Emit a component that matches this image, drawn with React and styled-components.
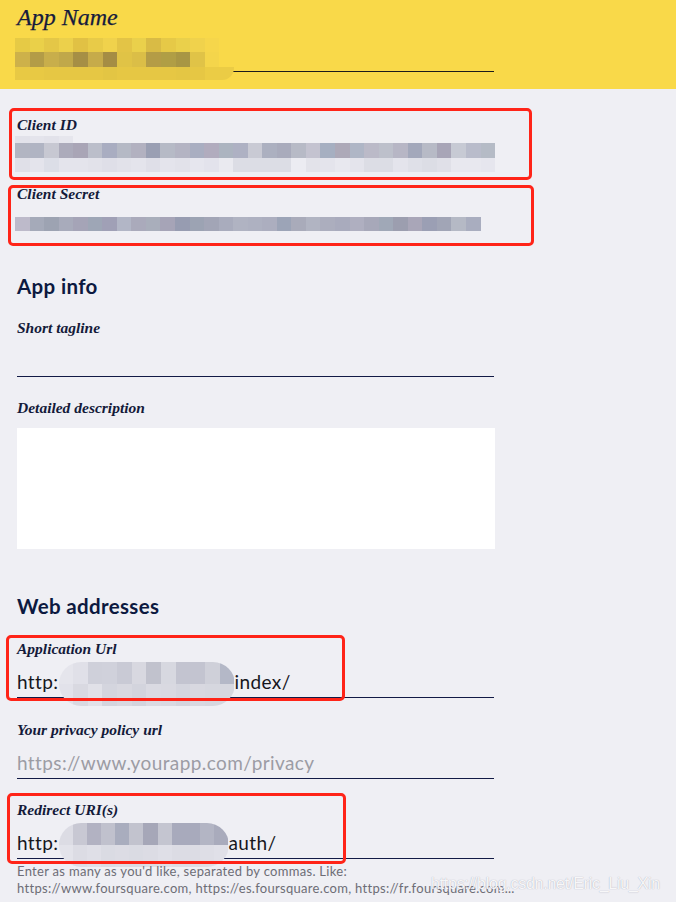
import React from "react";
import styled, { createGlobalStyle } from "styled-components";

const GlobalStyle = createGlobalStyle`
  body {
    margin: 0;
    background: #efeff4;
    font-family: "Lato", "Liberation Sans", sans-serif;
  }
`;

const Page = styled.div`
  width: 676px;
  min-height: 902px;
  background: #efeff4;
  overflow: hidden;
  position: relative;
`;

const Header = styled.header`
  background: #f9d949;
  height: 89px;
  box-sizing: border-box;
  padding: 3px 17px 0;
`;

const Title = styled.h1`
  margin: 0;
  font-family: "Liberation Serif", serif;
  font-style: italic;
  font-weight: 400;
  font-size: 24px;
  line-height: 28px;
  color: #161b3d;
  -webkit-text-stroke: 0.25px #161b3d;
`;

const HeaderInput = styled.div`
  position: relative;
  width: 477px;
  height: 40px;
  border-bottom: 1px solid #1b1b1b;
`;

const Mosaic = styled.div`
  position: absolute;
  left: ${(p) => p.$left}px;
  top: ${(p) => p.$top}px;
  display: flex;
  flex-direction: column;
`;

const MosaicRow = styled.div`
  display: flex;
  height: ${(p) => p.$h}px;
  overflow: hidden;
  border-bottom-right-radius: ${(p) => p.$radius || 0}px;
`;

const Cell = styled.span`
  display: block;
  width: ${(p) => p.$w}px;
  height: 100%;
  flex-shrink: 0;
`;

const Main = styled.main`
  padding: 26px 17px 0;
`;

const Field = styled.div`
  position: relative;
  width: 477px;
  margin-top: ${(p) => p.$mt || 0}px;
`;

const Label = styled.div`
  font-family: "Liberation Serif", serif;
  font-style: italic;
  font-weight: 700;
  font-size: 15.5px;
  line-height: 20px;
  color: #141a3a;
`;

const SecretArea = styled.div`
  position: relative;
  height: ${(p) => p.$h}px;
`;

const Heading = styled.h2`
  margin: ${(p) => p.$mt}px 0 0;
  font-family: "Lato", sans-serif;
  font-weight: 700;
  font-size: 20.5px;
  line-height: 24px;
  color: #0c1940;
  letter-spacing: 0.35px;
`;

const Input = styled.div`
  height: 39px;
  box-sizing: border-box;
  padding-top: 6px;
  border-bottom: 1px solid #121a45;
  font-family: "Lato", sans-serif;
  font-size: 19px;
  letter-spacing: 0.4px;
  color: ${(p) => (p.$placeholder ? "#9c9ca4" : "#16161c")};
  white-space: nowrap;
  display: flex;
  align-items: center;
`;

const TextArea = styled.div`
  margin-top: 10px;
  height: 121px;
  width: 478px;
  background: #ffffff;
`;

const Blur = styled.span`
  display: inline-flex;
  flex-direction: column;
  flex-shrink: 0;
  width: ${(p) => p.$w}px;
  height: 44px;
  margin-top: 6px;
  border-radius: 22px;
  overflow: hidden;
`;

const Highlight = styled.div`
  position: absolute;
  top: ${(p) => p.$top}px;
  left: ${(p) => p.$left}px;
  width: ${(p) => p.$w}px;
  height: ${(p) => p.$h}px;
  box-sizing: border-box;
  border: 3px solid #ff2418;
  border-radius: 5px;
  pointer-events: none;
  z-index: 2;
`;

const Help = styled.p`
  margin: 4px 0 0;
  font-family: "Lato", sans-serif;
  font-size: 13px;
  letter-spacing: 0.3px;
  line-height: 17px;
  color: #6d6d76;
  white-space: nowrap;
`;

const Watermark = styled.div`
  position: absolute;
  left: 431px;
  top: 875px;
  font-family: "Liberation Sans", sans-serif;
  font-size: 16px;
  letter-spacing: -0.25px;
  color: rgba(255, 255, 255, 0.92);
  text-shadow: 0 0 1px rgba(150, 150, 168, 0.9);
  white-space: nowrap;
`;

const headerRows = [
  { h: 14, c: ["#e6ca45", "#ead049", "#e4c747", "#ecd04b", "#e1c144", "#e8cb48", "#f0d24c", "#e3c446", "#ead04b", "#d9bb45", "#e6c947", "#ead04b", "#f0d24c", "#f6d64b"] },
  { h: 15, c: ["#cdb14a", "#b39c47", "#c8ae4b", "#c0a84a", "#a68f45", "#c6ab4a", "#a58d44", "#e0c346", "#dbbe47", "#b49c46", "#b09e45", "#a89644", "#e0c347", "#f4d54b"] },
  { h: 13, r: 12, c: ["#e8c944", "#e8c944", "#e6c744", "#e6c744", "#e6c744", "#e6c744", "#e3c544", "#e6c744", "#e6c744", "#e6c744", "#e6c744", "#e4c644", "#e6c744", "#ebcc45", "#ebcc45"] },
];

const idRows = [
  { h: 7, c: ["#e2e2ea", "#e4e4ec", "#e2e2ea", "#e6e6ed"] },
  { h: 15, c: ["#b2b5c2", "#b0b4c3", "#c7c8d2", "#acabbb", "#a9a5b6", "#bbbeca", "#a9adc1", "#b5b9c5", "#b2b1c0", "#9a9fb3", "#b6bac6", "#b4b4c3", "#a9aec1", "#b1acbe", "#acb4c0", "#aeb1c3", "#c9cad4", "#acb0c0", "#a9abbc", "#b7bac6", "#c4c3d0", "#a6afc1", "#ada9b8", "#afb6c6", "#bbbac8", "#bdc0cb", "#b7b6c5", "#a3a8bb", "#b7bac6", "#a8a5b7", "#c7cad4", "#b9bccb", "#b5bbc6"] },
  { h: 14, c: ["#e0e0e8", "#e4e4ec", "#dcdee7", "#e4e4ec", "#e4e4ec", "#e2e2ea", "#dfdfe8", "#e2e2ea", "#e4e4ec", "#dfdfe8", "#e4e4ec", "#e2e2ea", "#e6e6ee", "#e3e3ec", "#eaeaf0", "#dcdde5", "#dcdde5", "#dcdde5", "#dcdde5", "#ececf2", "#e3e3ea", "#e4e4ec", "#e8e8ef", "#e4e4ec", "#dcdde5", "#dcdde5", "#e4e4ec", "#dfe0e8", "#dcdde5", "#e0e0e8", "#e8e8ef", "#e8e8ef", "#e6e6ee"] },
];

const secretRows = [
  { h: 14, c: ["#bdbaca", "#a5aab9", "#9da3b2", "#a8abbb", "#a5a4b7", "#9ea6b6", "#a0a0b6", "#b2b6c6", "#aaaabb", "#a9aebb", "#a6a4b7", "#979cb1", "#9ca3b3", "#a2a5b6", "#a9acbd", "#b0b3c2", "#aeb1c1", "#acaebf", "#9ca4b7", "#a9abba", "#b1b4c2", "#acaebe", "#a9abbd", "#afafc0", "#a7a8b9", "#a0a8b7", "#9c9eaf", "#a9a6b8", "#9b9fb4", "#a1a5b6", "#b5b9c5", "#a9adbf"] },
];

const urlRows = [
  { h: 22, c: ["#e5e5ec", "#e0e0e8", "#cfd0da", "#d0d1db", "#c9cad5", "#d8d8e0", "#c1c2cd", "#d7d8e0", "#c3c4d0", "#c3c4d0", "#cfd0d9", "#b4b8c7"] },
  { h: 22, c: ["#e2e2ea", "#d9d9e1", "#e1e1e8", "#d4d5de", "#d8d8e0", "#d3d4dd", "#dadae2", "#d9d9e1", "#d4d5de", "#d8d8e0", "#d6d7df", "#d6d7df"] },
];

const redirectRows = [
  { h: 22, c: ["#dcdce4", "#c8c8d3", "#b2b2c2", "#c0c1cd", "#a9adbe", "#c2c3ce", "#a6a7b8", "#c4c5d0", "#a8aabc", "#a8aabc", "#b3b5c4", "#a9abbc"] },
  { h: 22, c: ["#e3e3ea", "#dcdce4", "#dfdfe7", "#dadbe3", "#dcdce4", "#dadbe3", "#dcdce4", "#dfdfe7", "#dcdce4", "#dcdce4", "#dedee6", "#e0e0e8"] },
];

const MosaicBlock = ({ rows, cell, left, top }) => (
  <Mosaic $left={left} $top={top}>
    {rows.map((row, i) => (
      <MosaicRow key={i} $h={row.h} $radius={row.r}>
        {row.c.map((col, j) => (
          <Cell key={j} $w={cell} style={{ background: col }} />
        ))}
      </MosaicRow>
    ))}
  </Mosaic>
);

const BlurredValue = ({ rows, width }) => (
  <Blur $w={width}>
    {rows.map((row, i) => (
      <MosaicRow key={i} $h={row.h}>
        {row.c.map((col, j) => (
          <Cell key={j} $w={width / row.c.length} style={{ background: col }} />
        ))}
      </MosaicRow>
    ))}
  </Blur>
);

const App = () => {
  return (
    <Page>
      <GlobalStyle />
      <Header>
        <Title>App Name</Title>
        <HeaderInput>
          <MosaicBlock rows={headerRows} cell={14.6} left={-2} top={7} />
        </HeaderInput>
      </Header>

      <Main>
        <Field>
          <Highlight $top={-7} $left={-8} $w={523} $h={72} />
          <Label>Client ID</Label>
          <SecretArea $h={38}>
            <MosaicBlock rows={idRows} cell={14.55} left={-2} top={1} />
          </SecretArea>
        </Field>

        <Field $mt={11}>
          <Highlight $top={1} $left={-9} $w={526} $h={61} />
          <Label>Client Secret</Label>
          <SecretArea $h={35}>
            <MosaicBlock rows={secretRows} cell={14.55} left={-2} top={13} />
          </SecretArea>
        </Field>

        <Heading $mt={35}>App info</Heading>

        <Field $mt={20}>
          <Label>Short tagline</Label>
          <Input />
        </Field>

        <Field $mt={21}>
          <Label>Detailed description</Label>
          <TextArea />
        </Field>

        <Heading $mt={45}>Web addresses</Heading>

        <Field $mt={21}>
          <Highlight $top={-4} $left={-11} $w={339} $h={66} />
          <Label>Application Url</Label>
          <Input>
            http:
            <BlurredValue rows={urlRows} width={176} />
            index/
          </Input>
        </Field>

        <Field $mt={22}>
          <Label>Your privacy policy url</Label>
          <Input $placeholder>https://www.yourapp.com/privacy</Input>
        </Field>

        <Field $mt={21}>
          <Highlight $top={-7} $left={-10} $w={339} $h={71} />
          <Label>Redirect URI(s)</Label>
          <Input>
            http:
            <BlurredValue rows={redirectRows} width={170} />
            auth/
          </Input>
          <Help>
            Enter as many as you'd like, separated by commas. Like:
            <br />
            https://www.foursquare.com, https://es.foursquare.com, https://fr.foursquare.com...
          </Help>
        </Field>
      </Main>
      <Watermark>https://blog.csdn.net/Eric_Liu_Xin</Watermark>
    </Page>
  );
};

export default App;
